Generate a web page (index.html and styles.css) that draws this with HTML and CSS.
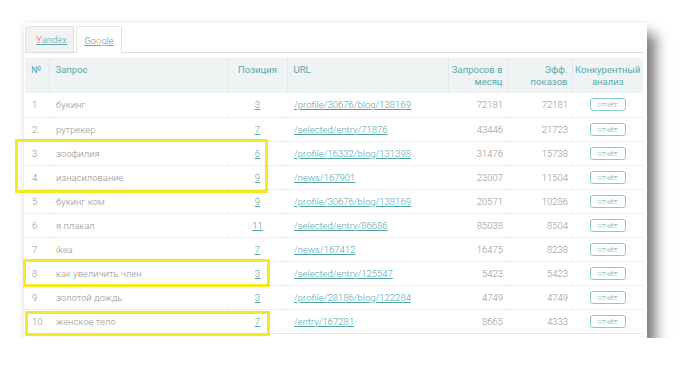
FILE: index.html
```html
<!DOCTYPE html>
<html lang="ru">
<head>
  <meta charset="UTF-8" />
  <title>Позиции запросов</title>
  <link rel="stylesheet" href="styles.css">
</head>
<body>
  <div class="panel">
    <div class="tabs">
      <a class="tab" href="#"><span class="ya-y">Y</span>andex</a>
      <a class="tab active" href="#"><span class="g-b">G</span><span class="g-r">o</span><span class="g-y">o</span><span class="g-b">g</span><span class="g-g">l</span><span class="g-r">e</span></a>
    </div>
    <table class="report">
      <colgroup>
        <col style="width:24px">
        <col style="width:179px">
        <col style="width:59px">
        <col style="width:161px">
        <col style="width:59px">
        <col style="width:65px">
        <col style="width:71px">
      </colgroup>
      <thead>
        <tr>
          <th>№</th>
          <th>Запрос</th>
          <th class="center">Позиция</th>
          <th>URL</th>
          <th class="right">Запросов в месяц</th>
          <th class="right">Эфф. показов</th>
          <th class="center">Конкурентный анализ</th>
        </tr>
      </thead>
      <tbody>
        <tr><td>1</td><td>букинг</td><td class="center"><a href="#">3</a></td><td><a href="#">/profile/30676/blog/138169</a></td><td class="right">72181</td><td class="right">72181</td><td class="center"><a class="btn" href="#">отчёт</a></td></tr>
        <tr><td>2</td><td>рутрекер</td><td class="center"><a href="#">7</a></td><td><a href="#">/selected/entry/71876</a></td><td class="right">43446</td><td class="right">21723</td><td class="center"><a class="btn" href="#">отчёт</a></td></tr>
        <tr><td>3</td><td>зоофилия</td><td class="center"><a href="#">6</a></td><td><a href="#">/profile/16332/blog/131398</a></td><td class="right">31476</td><td class="right">15738</td><td class="center"><a class="btn" href="#">отчёт</a></td></tr>
        <tr><td>4</td><td>изнасилование</td><td class="center"><a href="#">9</a></td><td><a href="#">/news/167901</a></td><td class="right">23007</td><td class="right">11504</td><td class="center"><a class="btn" href="#">отчёт</a></td></tr>
        <tr><td>5</td><td>букинг ком</td><td class="center"><a href="#">9</a></td><td><a href="#">/profile/30676/blog/138169</a></td><td class="right">20571</td><td class="right">10286</td><td class="center"><a class="btn" href="#">отчёт</a></td></tr>
        <tr><td>6</td><td>я плакал</td><td class="center"><a href="#">11</a></td><td><a href="#">/selected/entry/86686</a></td><td class="right">85038</td><td class="right">8504</td><td class="center"><a class="btn" href="#">отчёт</a></td></tr>
        <tr><td>7</td><td>ikea</td><td class="center"><a href="#">7</a></td><td><a href="#">/news/167412</a></td><td class="right">16475</td><td class="right">8238</td><td class="center"><a class="btn" href="#">отчёт</a></td></tr>
        <tr><td>8</td><td>как увеличить член</td><td class="center"><a href="#">3</a></td><td><a href="#">/selected/entry/125547</a></td><td class="right">5423</td><td class="right">5423</td><td class="center"><a class="btn" href="#">отчёт</a></td></tr>
        <tr><td>9</td><td>золотой дождь</td><td class="center"><a href="#">3</a></td><td><a href="#">/profile/28186/blog/122284</a></td><td class="right">4749</td><td class="right">4749</td><td class="center"><a class="btn" href="#">отчёт</a></td></tr>
        <tr><td>10</td><td>женское тело</td><td class="center"><a href="#">7</a></td><td><a href="#">/entry/167281</a></td><td class="right">8665</td><td class="right">4333</td><td class="center"><a class="btn" href="#">отчёт</a></td></tr>
      </tbody>
    </table>
    <div class="mark mark-1"></div>
    <div class="mark mark-2"></div>
    <div class="mark mark-3"></div>
  </div>
</body>
</html>
```
FILE: styles.css
```css
body {
  margin: 0;
  background: #fff;
  font-family: Roboto, 'Liberation Sans', sans-serif;
  color: #939393;
}
.panel {
  position: relative;
  width: 618px;
  margin: 23px 0 0 24px;
  padding: 3px 4px 4px 1px;
  background: #fff;
  box-shadow: 9px 11px 12px rgba(0,0,0,0.5), 0 0 7px rgba(0,0,0,0.08);
}
.tabs {
  display: flex;
  gap: 2px;
  align-items: flex-end;
  height: 26px;
  border-bottom: 1px solid #dedede;
  margin-bottom: 5px;
}
.tab {
  box-sizing: border-box;
  height: 26px;
  padding: 0 0 0 10px;
  display: flex;
  align-items: center;
  font-size: 9.5px;
  font-weight: 300;
  color: #5aa8ab;
  background: #f2f2f2;
  border: 1px solid #e2e2e2;
  border-bottom: none;
  border-radius: 2px 2px 0 0;
  text-decoration: underline;
  width: 49px;
}
.tab.active {
  background: #fff;
  height: 27px;
  margin-bottom: -1px;
  width: 46px;
  justify-content: center;
  padding: 0;
}
.ya-y { color: #e0506a; }
.g-b { color: #5a8fd6; }
.g-r { color: #e0695c; }
.g-y { color: #d9b43a; }
.g-g { color: #5ab06a; }
.report {
  width: 618px;
  border-collapse: collapse;
  table-layout: fixed;
  font-size: 9.5px;
  font-weight: 300;
}
.report th {
  height: 35px;
  box-sizing: border-box;
  padding: 6px 5px 0 6px;
  vertical-align: top;
  text-align: left;
  font-weight: 400;
  line-height: 12px;
  color: #5aa9ac;
  background: #eff3f3;
  border-right: 1px solid #e3e8e8;
}
.report th:last-child {
  border-right: none;
  border-top-right-radius: 4px;
}
.report td {
  height: 24px;
  box-sizing: border-box;
  padding: 0 5px 0 7px;
  border-bottom: 1px dotted #dcdcdc;
  white-space: nowrap;
}
.report tbody tr:last-child td {
  border-bottom: 1px solid #e6e6e6;
}
.report .center {
  text-align: center;
  padding-left: 0;
  padding-right: 0;
}
.report .right {
  text-align: right;
  padding-left: 0;
  padding-right: 4px;
}
.report a {
  color: #4fa3a7;
}
.report .btn {
  display: inline-block;
  width: 34px;
  height: 11px;
  line-height: 11px;
  border: 1px solid #8fcaca;
  border-radius: 3px;
  font-size: 8px;
  color: #6ab3b5;
  text-decoration: none;
  text-align: center;
}
.mark {
  position: absolute;
  border: 3px solid #f5e923;
  box-sizing: border-box;
}
.mark-1 { left: -9px; top: 116px; width: 253px; height: 54px; }
.mark-2 { left: -1px; top: 236px; width: 247px; height: 28px; }
.mark-3 { left: 1px; top: 288px; width: 245px; height: 25px; }
```
